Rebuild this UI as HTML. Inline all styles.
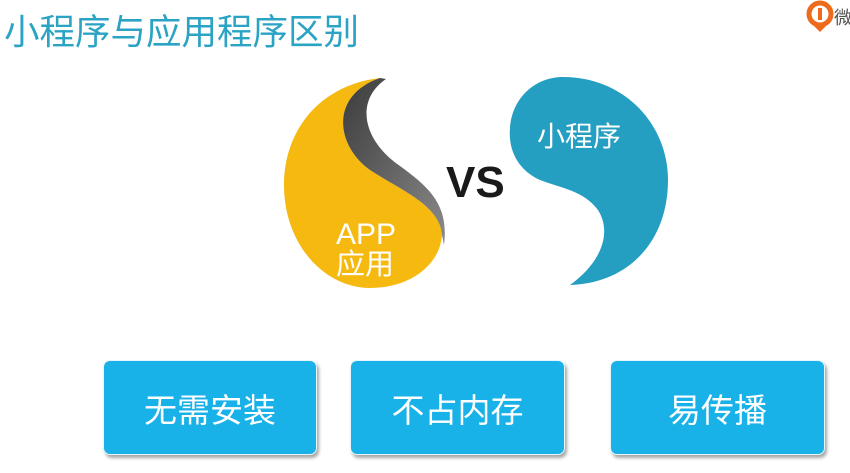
<!DOCTYPE html>
<html><head><meta charset="utf-8"><style>
body{margin:0;width:850px;height:473px;background:#fff;overflow:hidden;position:relative;font-family:"Liberation Sans","Noto Sans CJK SC",sans-serif}
.t{position:absolute;left:4px;top:10px;font-size:35.5px;color:#2aa3c4;line-height:44px;white-space:nowrap}
.b{position:absolute;top:360px;height:95px;background:#19b2e8;border-radius:7px;color:#fff;font-size:33px;display:flex;align-items:center;justify-content:center;box-shadow:2px 3px 3px rgba(0,0,0,.35);border:1px solid #e8f6fc;box-sizing:border-box}
</style></head><body>
<div class="t">小程序与应用程序区别</div>
<svg width="850" height="473" style="position:absolute;left:0;top:0">
<defs><linearGradient id="g" x1="0" y1="0" x2="1" y2="1"><stop offset="0" stop-color="#3c3c3c"/><stop offset="1" stop-color="#8a8a8a"/></linearGradient></defs>
<path d="M380,78 C320,85 284,130 284,185 C284,245 325,288 370,288 C410,288 440,265 442,235 C440,205 400,190 370,170 C335,145 330,95 380,78 Z" fill="#f5b90f"/>
<path d="M380,78 C330,95 335,145 370,170 C400,190 440,205 442,235 L444,245 C449,205 430,188 400,166 C362,140 355,100 386,79 Z" fill="url(#g)"/>
<path d="M563,77 C625,77 668,125 668,180 C668,240 630,283 570,285 C602,262 612,232 598,210 C583,190 560,188 540,180 C518,170 508,150 510,128 C512,98 535,77 563,77 Z" fill="#259fc1"/>
<text x="446" y="197" font-size="44" font-weight="bold" fill="#1a1a1a" font-family="Liberation Sans">VS</text>
<text x="336" y="244" font-size="30" fill="#fff">APP</text>
<text x="336" y="274" font-size="29" fill="#fff" font-family="Noto Sans CJK SC">应用</text>
<text x="537" y="146" font-size="28" fill="#fff" font-family="Noto Sans CJK SC">小程序</text>
<circle cx="820" cy="14" r="11" fill="none" stroke="#ee6a1c" stroke-width="5"/>
<path d="M814,26 L826,26 L820,32 Z" fill="#ee6a1c"/>
<rect x="818" y="8" width="4" height="12" fill="#ee6a1c"/>
<text x="834" y="24" font-size="18" fill="#555" font-family="Noto Sans CJK SC">微</text>
</svg>
<div class="b" style="left:103px;width:214px">无需安装</div>
<div class="b" style="left:350px;width:215px">不占内存</div>
<div class="b" style="left:610px;width:215px">易传播</div>
</body></html>
